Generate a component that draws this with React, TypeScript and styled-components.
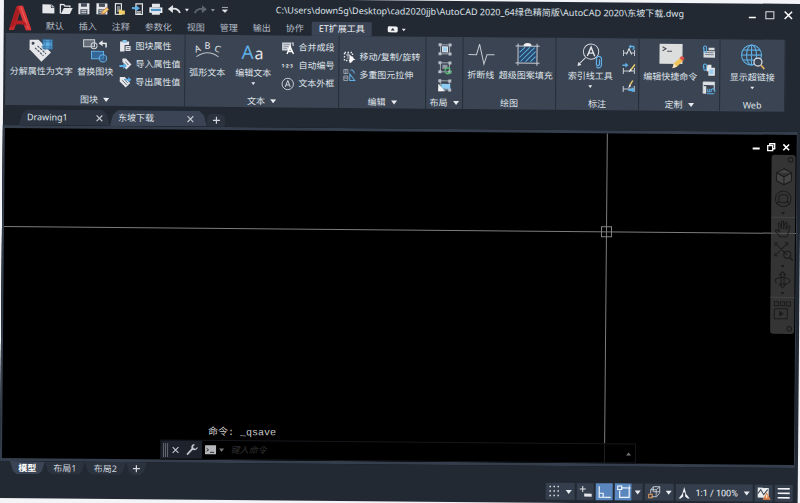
import React from "react";
import styled, { createGlobalStyle, css } from "styled-components";

const GlobalStyle = createGlobalStyle`
  * { box-sizing: border-box; }
  html, body { margin: 0; padding: 0; overflow: hidden; }
  body {
    background: #f3f4f7;
    color: #dfe3e9;
    font: 9px/12px "Noto Sans", "Noto Sans CJK SC", sans-serif;
  }
  button, input { font: inherit; color: inherit; }
  button { background: none; border: 0; padding: 0; margin: 0; }
  svg { display: block; flex: none; overflow: visible; }
`;

const Desk = styled.div`
  height: 100vh;
  overflow: hidden;
`;

const Window = styled.div`
  display: flex;
  flex-direction: column;
  width: calc(100vw - 2px);
  height: calc(100vh - 2px);
  margin: -3px 0 0 4px;
  background: #222933;
  transform: rotate(0.5deg);
  transform-origin: 0 0;
`;

/* ---------- header ---------- */

const Header = styled.header`
  display: grid;
  grid-template-columns: 35px 1fr;
  grid-template-rows: 22px 14px;
`;

const AppButton = styled.button`
  grid-row: 1 / 3;
  padding: 5px 0 0 5px;
`;

const TitleBar = styled.div`
  display: flex;
  align-items: center;
  padding-right: 5px;
`;

const SlotButton = styled.button<{ $w?: number }>`
  display: flex;
  align-items: center;
  justify-content: center;
  width: ${(p) => p.$w ?? 18}px;
  height: 16px;
`;

const Title = styled.h1`
  flex: 1;
  margin: 0 0 0 43px;
  font-size: 9px;
  font-weight: 400;
  line-height: 16px;
  white-space: nowrap;
`;

const MenuTabs = styled.nav`
  display: flex;
  gap: 1px;
`;

const MenuTab = styled.button<{ $active?: boolean }>`
  padding: 0 7px;
  line-height: 14px;
  color: #b4bac4;
  white-space: nowrap;
  ${(p) =>
    p.$active &&
    css`
      background: #3b4454;
      color: #eef1f5;
    `}
`;

const PlayButton = styled.button`
  display: flex;
  align-items: center;
  gap: 4px;
  margin-left: 15px;
`;

/* ---------- ribbon ---------- */

const Ribbon = styled.div`
  display: flex;
  margin-left: 2px;
`;

const Panel = styled.section<{ $w: number }>`
  display: flex;
  flex-direction: column;
  width: ${(p) => p.$w}px;
  height: 72px;
  background: #3b4453;
  border-right: 1px solid #252d38;
`;

const PanelBody = styled.div<{ $pad?: number }>`
  display: flex;
  flex: 1;
  justify-content: ${(p) => (p.$pad === undefined ? "center" : "flex-start")};
  padding-left: ${(p) => p.$pad ?? 0}px;
`;

const Caption = styled.button`
  display: flex;
  align-items: center;
  justify-content: center;
  gap: 5px;
  height: 12px;
`;

const BigButton = styled.button<{ $w: number }>`
  display: flex;
  flex-direction: column;
  align-items: center;
  gap: 3px;
  width: ${(p) => p.$w}px;
  padding-top: 5px;
  white-space: nowrap;
`;

const SmallColumn = styled.div<{ $pad?: number }>`
  display: flex;
  flex-direction: column;
  justify-content: center;
  padding-left: ${(p) => p.$pad ?? 0}px;
`;

const SmallButton = styled.button`
  display: flex;
  align-items: center;
  gap: 4px;
  height: 18px;
  white-space: nowrap;
`;

/* ---------- document tabs ---------- */

const FileTabs = styled.div`
  display: flex;
  align-items: flex-end;
  height: 20px;
  padding-left: 16px;
`;

const FileTab = styled.div<{ $active?: boolean }>`
  display: flex;
  align-items: center;
  justify-content: space-between;
  width: ${(p) => (p.$active ? 97 : 91)}px;
  height: 16px;
  padding: 0 8px;
  padding-right: ${(p) => (p.$active ? 13 : 7)}px;
  background: ${(p) => (p.$active ? "#3b4454" : "#2d3542")};
  clip-path: polygon(0 100%, 3px 30%, 8px 0, calc(100% - 8px) 0, calc(100% - 3px) 30%, 100% 100%);
`;

const AddTab = styled.button`
  display: flex;
  align-items: center;
  justify-content: center;
  width: 18px;
  height: 13px;
  background: #2b333f;
  border-radius: 5px 5px 2px 2px;
`;

/* ---------- drawing area ---------- */

const Canvas = styled.main`
  position: relative;
  flex: 1;
  margin: 0 3px 0 0;
  background: #000;
  border: solid #343e4c;
  border-width: 3px 1px 3px 2px;
  overflow: hidden;
`;

const HorizontalHair = styled.div`
  position: absolute;
  left: 0;
  right: 0;
  top: 98px;
  height: 1px;
  background: #7c7c7c;
`;

const VerticalHair = styled.div`
  position: absolute;
  top: 0;
  bottom: 0;
  left: 76%;
  width: 1px;
  background: #7c7c7c;
`;

const PickBox = styled.div`
  position: absolute;
  top: 93px;
  left: calc(76% - 5px);
  width: 11px;
  height: 11px;
  border: 1px solid #858585;
`;

const ViewControls = styled.div`
  position: absolute;
  top: 4px;
  right: 3px;
  display: flex;
`;

const NavBar = styled.aside`
  position: absolute;
  top: 20px;
  right: 1px;
  display: flex;
  flex-direction: column;
  align-items: center;
  width: 24px;
  background: rgba(72, 72, 72, 0.72);
  border-radius: 3px;
`;

const NavButton = styled.button<{ $h: number; $line?: boolean }>`
  display: flex;
  align-items: center;
  justify-content: center;
  width: 100%;
  height: ${(p) => p.$h}px;
  border-bottom: ${(p) => (p.$line ? "1px solid #444" : "0")};
`;

const NavEnd = styled.button<{ $h: number }>`
  align-self: flex-end;
  width: 10px;
  height: ${(p) => p.$h}px;
  padding: 2px;
`;

const History = styled.div`
  position: absolute;
  left: 26%;
  bottom: 21px;
  color: #c9c9c9;
  font: 10px/12px "Liberation Mono", "Noto Sans CJK SC", monospace;
  white-space: pre;
`;

const CommandLine = styled.div`
  position: absolute;
  left: 20%;
  bottom: 0;
  display: flex;
  align-items: center;
  width: 60%;
  height: 20px;
  background: rgba(0, 0, 0, 0.75);
  border: 1px solid #15171c;
`;

const CommandGrip = styled.div`
  display: flex;
  align-items: center;
  height: 100%;
  padding-left: 2px;
  background: #1d222d;
`;

const CommandInput = styled.input`
  flex: 1;
  min-width: 0;
  padding: 0 0 0 4px;
  background: none;
  border: 0;
  outline: 0;
  &::placeholder {
    color: #303030;
    font-style: italic;
    opacity: 1;
  }
`;

/* ---------- footer ---------- */

const LayoutTabs = styled.nav`
  display: flex;
  padding-left: 10px;
`;

const LayoutTab = styled.button<{ $w: number; $active?: boolean }>`
  display: flex;
  align-items: center;
  justify-content: center;
  width: ${(p) => p.$w}px;
  height: 13px;
  background: ${(p) => (p.$active ? "#3b4454" : "#2b333f")};
  font-weight: ${(p) => (p.$active ? 700 : 400)};
  color: ${(p) => (p.$active ? "#fff" : "#ccd1d9")};
  clip-path: polygon(0 0, 100% 0, calc(100% - 3px) 75%, calc(100% - 7px) 100%, 7px 100%, 3px 75%);
`;

const StatusBar = styled.footer`
  display: flex;
  justify-content: flex-end;
  gap: 2px;
  padding: 4px 5px 3px 0;
`;

const StatusButton = styled.button<{ $w: number; $on?: boolean }>`
  display: flex;
  align-items: center;
  justify-content: space-around;
  width: ${(p) => p.$w}px;
  height: 17px;
  background: ${(p) => (p.$on ? "#5a87bd" : "#343e4c")};
  white-space: nowrap;
`;

const StatusPair = styled.div`
  display: flex;
`;

const ScaleText = styled.span`
  color: #f2f4f7;
  font-family: Roboto, "Noto Sans", sans-serif;
`;

/* ---------- icons ---------- */

type Kids = { children?: React.ReactNode };
const Icon = ({ w, h = w, box, children }: Kids & { w: number; h?: number; box?: string }) => (
  <svg width={w} height={h} viewBox={box ?? `0 0 ${w} ${h}`} fill="none" aria-hidden="true">
    {children}
  </svg>
);

const Caret = ({ size = 6, color = "#e8ebf0" }: { size?: number; color?: string }) => (
  <Icon w={size} h={size > 4 ? 4 : 3} box="0 0 6 4">
    <path d="M0 0h6L3 4z" fill={color} />
  </Icon>
);

const Cross = ({ size = 7, color = "#c3c8d0", weight = 1.3 }) => (
  <Icon w={size} box="0 0 8 8">
    <path d="M.7.7l6.6 6.6M7.3.7L.7 7.3" stroke={color} strokeWidth={weight} />
  </Icon>
);

const Plus = () => (
  <Icon w={7}>
    <path d="M3.5 0v7M0 3.5h7" stroke="#d5d9df" strokeWidth="1.2" />
  </Icon>
);

const Logo = () => (
  <Icon w={23} h={26}>
    <path d="M7.5 2Q8 .5 10 .5h4L22.5 24q.2 1-1 1h-3.7q-1 0-1.300-1L11 7 5.700 24q-.4 1-1.400 1H1q-1 0-.6-1.200z" fill="#c62a2c" />
    <path d="M10 .5h4L22.500 24q.2 1-1 1h-3.700L10.500 6z" fill="#d9383a" />
    <path d="M7.500 2L10.500 6 5.500 21 1 22.500z" fill="#a81d22" />
    <path d="M5.500 16Q12 13.500 18.500 18l1 3.500Q12 17.500 4.500 20.500z" fill="#b42025" />
    <path d="M12 2l7.500 21" stroke="#ee6a64" strokeWidth=".8" />
  </Icon>
);

const W = "#e4e6e9";
const B = "#5fb0e6";
const Y = "#f0cf6a";

const NewIcon = () => (
  <Icon w={13} h={11}>
    <path d="M.5 1H9v3.500h3.500V10H.5z" fill={W} />
    <path d="M9.500.500L13 4H9.500z" fill="#aeb3ba" />
  </Icon>
);
const OpenIcon = () => (
  <Icon w={13} h={11}>
    <path d="M.5 10V1h3.500l1 1.500h5V4" stroke={W} strokeWidth="1.300" />
    <path d="M1 10.500L4 4.500h8.800L10 10.500z" fill={W} />
  </Icon>
);
const SaveIcon = ({ pencil = false }) => (
  <Icon w={13} h={12}>
    <path d="M.5.500h11v11H.5z" fill={W} />
    <path d="M3 .500h6v3.500H3zM2.500 6.500h7v5h-7z" fill="#454d5a" />
    <path d="M3.500 8h5M3.500 10h5" stroke={W} />
    {pencil && <path d="M5.500 11.500l1-3 4.500-4 2 2-4.500 4z" fill={Y} stroke="#c25a3a" strokeWidth=".6" />}
  </Icon>
);
const DocInIcon = () => (
  <Icon w={12} h={12}>
    <path d="M1.500.700h6v10.600h-6z" stroke={W} strokeWidth="1.200" />
    <path d="M3 4h3M3 6h3M3 8h3" stroke={W} />
    <path d="M5 11.500v-5h2.500l.7 1H11v4z" fill={Y} />
  </Icon>
);
const DocOutIcon = () => (
  <Icon w={12} h={12}>
    <path d="M4 .700h6.500v10.600H4z" stroke={W} strokeWidth="1.200" />
    <path d="M5 8.500h4M5 10h4" stroke={W} />
    <path d="M0 4h4V2l4 3-4 3V6H0z" fill={B} />
  </Icon>
);
const PrintIcon = () => (
  <Icon w={14} h={12}>
    <path d="M3 .500h8V4H3z" fill={W} />
    <path d="M.5 4h13v5.500H.5z" fill="#f3f4f5" />
    <path d="M2 5.500h10V8H2z" fill="#4d93c8" />
    <path d="M3 8h8v3.500H3z" fill={W} />
  </Icon>
);
const UndoIcon = ({ color = W, flip = false }) => (
  <Icon w={13} h={10}>
    <g transform={flip ? "matrix(-1 0 0 1 13 0)" : undefined}>
      <path d="M3 4.500q7-1.500 9 4" stroke={color} strokeWidth="1.900" />
      <path d="M0 4.500L5 .500v8z" fill={color} />
    </g>
  </Icon>
);

const TagIcon = () => (
  <Icon w={26} h={24}>
    <path d="M1 1.500h9L22.500 14 13 23.500 1 11z" fill={W} />
    <circle cx="4.500" cy="5" r="1.500" fill="#3b4453" />
    <path d="M6.500 9.500l8.500 8M9 7.500l8.500 8" stroke="#3b4453" strokeDasharray="2.500 1" />
    <path d="M14.500 1.500h9v9h-9z" fill={B} stroke="#3979ac" />
    <path d="M13 3.500h12M13 8.500h12M16.500 0v12M21.500 0v12" stroke="#2b5f8d" strokeWidth=".7" />
  </Icon>
);
const ReplaceIcon = () => (
  <Icon w={26} h={24}>
    <path d="M1 1h11v7H1z" fill="#656d79" stroke="#ced2d8" />
    <circle cx="11.500" cy="7" r="3" stroke="#ced2d8" />
    <path d="M19 4.500h4.500V8.500" stroke={W} strokeWidth="1.500" />
    <path d="M16 4.500l4-3v6z" fill={W} />
    <path d="M9 12.500h12v7.500H9z" fill="#356899" stroke={B} />
    <circle cx="20.500" cy="19.500" r="3.700" fill="#356899" fillOpacity=".6" stroke={B} />
  </Icon>
);
const BlockAttr = () => (
  <Icon w={12} h={12}>
    <path d="M.5 1.500h9v10h-9z" fill={W} />
    <path d="M3 0h4v3H3z" fill="#8ec7ec" />
    <path d="M5.500 5.500h6v6h-6z" fill={W} stroke="#3b4453" />
    <path d="M7 7.500h3M7 9.500h3" stroke="#3b4453" strokeWidth=".7" />
  </Icon>
);
const AttrTag = ({ out = false }) => (
  <Icon w={12} h={12}>
    <path d={out ? "M.5 1h5l5.500 6-4.500 4.500-6-6z" : "M3 .500h3.500L12 6.500 7 11.500 4.500 9l2-2L3 4z"} fill={W} />
    <path d={out ? "M3 4l4.500 5M5 3l3.500 4" : "M6 3.500l3 3.500"} stroke="#3b4453" strokeWidth=".7" />
    <path d={out ? "M5 3h4V1l3 2.700L9 6.500V4.500H6z" : "M0 7h4V5l3.500 3L4 11V9H0z"} fill={B} />
  </Icon>
);
const LatinGlyphs = styled.g`
  font-family: "Noto Sans", sans-serif;
`;
const ArcText = () => (
  <Icon w={26} h={24}>
    <LatinGlyphs fill="#e6e8eb" fontSize="9" textAnchor="middle">
      <text x="4" y="12" transform="rotate(-20 4 12)">A</text>
      <text x="13" y="9">B</text>
      <text x="22" y="12" transform="rotate(20 22 12)">C</text>
    </LatinGlyphs>
    <path d="M2 17q11-8 22 0" stroke="#bcc2ca" />
  </Icon>
);
const EditText = () => (
  <Icon w={26} h={24}>
    <LatinGlyphs>
      <text x="1" y="19" fontSize="19" fill={B}>A</text>
      <text x="14" y="19" fontSize="16" fill={W}>a</text>
    </LatinGlyphs>
  </Icon>
);
const MergeIcon = () => (
  <Icon w={13} h={13}>
    <path d="M.5 1h9v8h-9z" fill="#cfd3d9" />
    <path d="M2 3h6M2 5h5M2 7h3" stroke="#77808c" strokeWidth=".7" />
    <path d="M5.500 12.500L8.500 5l3.500 7.500M7 10h4" stroke="#fff" strokeWidth="1.400" />
    <path d="M10 1.500h1.500v3" stroke={W} />
  </Icon>
);
const NumberIcon = () => (
  <Icon w={13} h={12}>
    <LatinGlyphs>
      <text x="0" y="8" fontSize="5" fontWeight="700" fill={W}>1·2·3</text>
    </LatinGlyphs>
  </Icon>
);
const CircledA = () => (
  <Icon w={13} h={13}>
    <circle cx="6.500" cy="6.500" r="5.700" stroke={W} strokeWidth=".8" />
    <path d="M4 9.500l2.500-6.500L9 9.500M5 7.500h3" stroke={W} strokeWidth=".9" />
  </Icon>
);
const MoveIcon = () => (
  <Icon w={12} h={12}>
    <path d="M1 1.500h8v8H1z" stroke={W} strokeWidth="1.400" strokeDasharray="1.500 1.500" />
    <path d="M2.500 4h4M4.500 2v6" stroke={W} strokeWidth=".7" />
    <path d="M6 3.500l6 5.500H9l-1 2.500L6 12z" fill="#fff" />
  </Icon>
);
const StretchIcon = () => (
  <Icon w={12} h={12}>
    <path d="M.5.500h4v4h-4zM.5 7h4v4.500h-4zM2.500.500V5M.5 9h4" stroke="#aab1bb" strokeWidth=".8" />
    <path d="M7 1h2q2 1.500 2 3.500M6.500 5l5 6.500h-5V7z" stroke={B} />
  </Icon>
);
const LayoutIcon = ({ kind }: { kind: number }) => (
  <Icon w={13} h={13}>
    <path d="M2 2h9v9H2z" stroke="#b9bfc7" strokeWidth=".8" />
    <path d="M0 .500h3v3H0zM10 .500h3v3h-3zM0 9.500h3v3H0zM10 9.500h3v3h-3z" fill="#b9bfc7" />
    {kind === 0 && <path d="M4 4h5v5H4z" fill="#9fd0ef" stroke={W} />}
    {kind === 1 && (
      <>
        <path d="M4 4h5v4H4z" fill="#9299a4" />
        <path d="M6.500 10a3 3 0 015.500-1.500M12.500 10a3 3 0 01-5.500 1.500" stroke="#4fc06c" strokeWidth="1.400" />
      </>
    )}
    {kind === 2 && (
      <>
        <path d="M3 5h9v5H3z" fill="#8ccbf2" />
        <path d="M0 5l7 7.500H0z" fill="#f2f3f4" />
      </>
    )}
  </Icon>
);
const BreakIcon = () => (
  <Icon w={26} h={24}>
    <path d="M0 12.500h8l3-10.500 4.500 20 3-9.500H26" stroke="#c6cbd2" strokeWidth="1" />
  </Icon>
);
const HatchIcon = () => (
  <Icon w={28} h={24}>
    <path d="M5.500 4.500h17v15h-17z" fill="#27496b" />
    <path d="M6 10l5.500-5.500M6 15l10.500-10.500M7 19L21 5M12 19l10-10M17 19l5-5" stroke="#63aee0" />
    <path d="M2 3.500h24M2 20.500h24M4.500 1v22M23.500 1v22" stroke="#c8cdd4" />
    <path d="M10 3.500q0-3 4-3t4 3z" fill="#f0f1f3" />
  </Icon>
);
const LeaderIcon = () => (
  <Icon w={26} h={26}>
    <circle cx="13.500" cy="8.500" r="7.700" stroke="#d2d6dc" />
    <path d="M9.800 13l3.700-9 3.700 9M11.200 10h4.600" stroke={W} strokeWidth="1.400" />
    <path d="M8 14.500L2 20.500" stroke="#d2d6dc" />
    <path d="M0 23l1-4 3 3z" fill={W} />
    <path d="M22 16v5.500q-1.500 2-3 0V15q2.500-3.500 5 0v7.500q-2.500 4-5 1" stroke={B} strokeWidth="1.200" />
  </Icon>
);
const DimIcon = ({ kind }: { kind: number }) => (
  <Icon w={13} h={12}>
    <path d="M1 5.500v6M12 5.500v6M1 8.500h11" stroke="#c6cbd2" />
    {kind === 0 && (
      <>
        <path d="M4 10l2.500-6L9 10" fill="#3b4453" stroke={W} />
        <path d="M7.500 2H11q1.500 2-1 3" stroke={B} strokeWidth="1.300" />
        <path d="M6 2l2.500-2v4z" fill={B} />
      </>
    )}
    {kind === 1 && (
      <>
        <path d="M0 2h3V0l3 2.700L3 5V3.500H0z" fill={B} />
        <path d="M12.500 2L8 8" stroke={Y} strokeWidth="1.400" />
        <path d="M8 6l1.500 2L6 10z" fill={W} />
      </>
    )}
    {kind === 2 && (
      <>
        <path d="M10.500 0L7.500 5" stroke={Y} strokeWidth="1.400" />
        <path d="M7 4l2 1.500L6 8z" fill={W} />
        <path d="M6 8.500h3.500V6.500L13 9.500l-3.500 2.500v-1.500H6z" fill={B} />
      </>
    )}
  </Icon>
);
const CommandIcon = () => (
  <Icon w={28} h={26}>
    <path d="M2 0h23v20H2z" fill="#dcdddd" />
    <path d="M5 3l3.500 2L5 7M9.500 7.500h5" stroke="#4a4f57" />
    <path d="M15 24.500l1.500-5 6.500-6 3 3-6.500 6.500z" fill="#f2c35b" />
    <path d="M15 24.500l1.500-5 3 3.500z" fill="#f6e7c4" />
    <path d="M22 14l1.500-1.500q2.500-.5 3.500 2L25 17z" fill="#df5348" />
  </Icon>
);
const CustomIcon = ({ kind }: { kind: number }) => (
  <Icon w={13} h={13}>
    {kind === 0 && <path d="M1 6h11.500v6.500H1zM6 2.500h6V5H6z" fill="#d7dade" />}
    {kind === 0 && <path d="M2.500 9.500h8.500M2.500 7.500h8.500" stroke="#7a828d" />}
    {kind === 1 && <path d="M5 1.500h4v3h3.500v8H6V8H4z" fill="#e6e8ea" />}
    {kind === 1 && <path d="M7 6h4v5H7z" fill="#9bcdf0" />}
    {kind < 2 && <path d="M1 5V2q1.500-2 3 0v4q-1.500 2-2.500.5V3" stroke={B} />}
    {kind === 2 && (
      <>
        <path d="M1 1h11v3H1zM1 5h3v7H1z" fill="#dde0e4" />
        <path d="M1 1h11v8.500M1 1v11h3" stroke="#dde0e4" />
        <path d="M5.500 7.500v3h2v-3M9 11V8.500q2-2 3.500 0V11M5 12.500h7" stroke={B} />
      </>
    )}
  </Icon>
);
const WebIcon = () => (
  <Icon w={26} h={26}>
    <g stroke={B} strokeWidth="1.100">
      <circle cx="12" cy="10.500" r="10" />
      <ellipse cx="12" cy="10.500" rx="5" ry="10" />
      <path d="M12 .500v20M2 10.500h20M3.500 5.500h17M3.500 15.500h17" />
    </g>
    <circle cx="18.500" cy="17.500" r="4" fill="#3b4453" stroke="#e0e3e7" strokeWidth="1.200" />
    <path d="M21.500 20.500l3.500 4" stroke="#d9a960" strokeWidth="1.700" />
  </Icon>
);

const N = "#1b1b1b";
const CubeIcon = () => (
  <Icon w={17} h={18}>
    <path d="M8.500 1L16 5v8l-7.500 4L1 13V5zM1 5l7.500 4L16 5M8.500 9v8" fill="#565656" fillOpacity=".5" stroke={N} />
  </Icon>
);
const WheelIcon = () => (
  <Icon w={18}>
    <circle cx="9" cy="9" r="7.800" stroke={N} />
    <rect x="4.500" y="5" width="9" height="8" rx="3" stroke={N} />
    <path d="M2 14.500l3-3M16 14.500l-3-3" stroke={N} />
  </Icon>
);
const HandIcon = () => (
  <Icon w={18}>
    <path d="M6 17q-2-3-4.500-5.500Q1 9.500 3 10l2.500 2-1.500-8q1-2 2 0L7.500 9V2q1-1.500 2 0v7l1.500-6q1.500-1.500 2 .5L12 10l2.500-4q1.500-.5 1.500 1l-3 10z" stroke={N} />
  </Icon>
);
const ZoomIcon = () => (
  <Icon w={19}>
    <path d="M2 2l11 11M13 2L2 13M1 4V1h3M11 1h3v3M1 11v3h3" stroke={N} />
    <circle cx="13.500" cy="13" r="3.500" stroke={N} />
    <path d="M16 15.500l3 3" stroke={N} strokeWidth="1.400" />
  </Icon>
);
const OrbitIcon = () => (
  <Icon w={18}>
    <path d="M7.500 4v10H6l3 3 3-3h-1.500V4H12L9 1 6 4z" stroke={N} />
    <path d="M3 12q-4-3 2-5 6-1 10 1 4 3-2 5l-7 .2" stroke={N} />
  </Icon>
);
const MotionIcon = () => (
  <Icon w={18} h={19}>
    <path d="M1 1h4v4H1zM7 1h4v4H7zM13 1h4v4h-4zM1 8h13v10H1z" stroke={N} />
    <path d="M6 10l4.500 3L6 16z" fill={N} />
  </Icon>
);

/* ---------- composition ---------- */

const Small = ({ icon, label, aria }: { icon: React.ReactNode; label?: string; aria?: string }) => (
  <SmallButton aria-label={aria}>
    {icon}
    {label}
  </SmallButton>
);

const Big = ({ w, icon, label, menu }: { w: number; icon: React.ReactNode; label: string; menu?: boolean }) => (
  <BigButton $w={w}>
    <Icon w={28} h={24} box="-1 0 28 24">
      {icon}
    </Icon>
    <span>{label}</span>
    {menu && <Caret size={4} />}
  </BigButton>
);

const menuNames = ["默认", "插入", "注释", "参数化", "视图", "管理", "输出", "协作"];

export default function App() {
  return (
    <Desk>
      <GlobalStyle />
      <Window>
        <Header>
          <AppButton aria-label="AutoCAD"><Logo /></AppButton>
          <TitleBar>
            <SlotButton aria-label="新建"><NewIcon /></SlotButton>
            <SlotButton aria-label="打开"><OpenIcon /></SlotButton>
            <SlotButton aria-label="保存"><SaveIcon /></SlotButton>
            <SlotButton aria-label="另存为"><SaveIcon pencil /></SlotButton>
            <SlotButton aria-label="从移动设备打开"><DocInIcon /></SlotButton>
            <SlotButton aria-label="保存到移动设备"><DocOutIcon /></SlotButton>
            <SlotButton aria-label="打印"><PrintIcon /></SlotButton>
            <SlotButton aria-label="放弃"><UndoIcon /></SlotButton>
            <SlotButton $w={8} aria-label="放弃列表"><Caret size={4} /></SlotButton>
            <SlotButton aria-label="重做"><UndoIcon flip color="#5d6570" /></SlotButton>
            <SlotButton $w={8} aria-label="重做列表"><Caret size={4} color="#8a919b" /></SlotButton>
            <SlotButton $w={16} aria-label="自定义">
              <Icon w={6} h={6}><path d="M0 .500h6M.500 3h5L3 5.500z" fill={W} stroke={W} strokeWidth=".7" /></Icon>
            </SlotButton>
            <Title>C:\Users\down5g\Desktop\cad2020jjb\AutoCAD 2020_64绿色精简版\AutoCAD 2020\东坡下载.dwg</Title>
            <SlotButton aria-label="最小化">
              <Icon w={7} h={7}><path d="M0 6h7" stroke="#fff" strokeWidth="1.500" /></Icon>
            </SlotButton>
            <SlotButton aria-label="最大化">
              <Icon w={10} h={9}><path d="M1 1h8v7H1z" stroke="#dfe2e6" /></Icon>
            </SlotButton>
            <SlotButton aria-label="关闭"><Cross size={9} color="#fff" /></SlotButton>
          </TitleBar>
          <MenuTabs>
            {menuNames.map((name) => (
              <MenuTab key={name}>{name}</MenuTab>
            ))}
            <MenuTab $active>ET扩展工具</MenuTab>
            <PlayButton aria-label="功能区显示">
              <Icon w={10} h={6}>
                <rect width="10" height="6" rx="1.500" fill="#f0f2f4" />
                <path d="M3 4l2-2.500L7 4z" fill="#222933" />
              </Icon>
              <Caret size={4} />
            </PlayButton>
          </MenuTabs>
        </Header>

        <Ribbon>
          <Panel $w={180}>
            <PanelBody $pad={3}>
              <Big w={66} icon={<TagIcon />} label="分解属性为文字" />
              <Big w={42} icon={<ReplaceIcon />} label="替换图块" />
              <SmallColumn $pad={3}>
                <Small icon={<BlockAttr />} label="图块属性" />
                <Small icon={<AttrTag />} label="导入属性值" />
                <Small icon={<AttrTag out />} label="导出属性值" />
              </SmallColumn>
            </PanelBody>
            <Caption>图块 <Caret /></Caption>
          </Panel>
          <Panel $w={154}>
            <PanelBody $pad={0}>
              <Big w={44} icon={<ArcText />} label="弧形文本" />
              <Big w={48} icon={<EditText />} label="编辑文本" menu />
              <SmallColumn $pad={4}>
                <Small icon={<MergeIcon />} label="合并成段" />
                <Small icon={<NumberIcon />} label="自动编号" />
                <Small icon={<CircledA />} label="文本外框" />
              </SmallColumn>
            </PanelBody>
            <Caption>文本 <Caret /></Caption>
          </Panel>
          <Panel $w={87}>
            <PanelBody $pad={0}>
              <SmallColumn $pad={4}>
                <Small icon={<MoveIcon />} label="移动/复制/旋转" />
                <Small icon={<StretchIcon />} label="多重图元拉伸" />
              </SmallColumn>
            </PanelBody>
            <Caption>编辑 <Caret /></Caption>
          </Panel>
          <Panel $w={37}>
            <PanelBody>
              <SmallColumn>
                <Small icon={<LayoutIcon kind={0} />} aria="对齐空间" />
                <Small icon={<LayoutIcon kind={1} />} aria="同步视口" />
                <Small icon={<LayoutIcon kind={2} />} aria="合并布局" />
              </SmallColumn>
            </PanelBody>
            <Caption>布局 <Caret /></Caption>
          </Panel>
          <Panel $w={93}>
            <PanelBody $pad={0}>
              <Big w={35} icon={<BreakIcon />} label="折断线" />
              <Big w={55} icon={<HatchIcon />} label="超级图案填充" />
            </PanelBody>
            <Caption>绘图</Caption>
          </Panel>
          <Panel $w={83}>
            <PanelBody>
              <Big w={62} icon={<LeaderIcon />} label="索引线工具" menu />
              <SmallColumn $pad={1}>
                <Small icon={<DimIcon kind={0} />} aria="重置文字" />
                <Small icon={<DimIcon kind={1} />} aria="输入样式" />
                <Small icon={<DimIcon kind={2} />} aria="输出样式" />
              </SmallColumn>
            </PanelBody>
            <Caption>标注</Caption>
          </Panel>
          <Panel $w={81}>
            <PanelBody $pad={1}>
              <Big w={60} icon={<CommandIcon />} label="编辑快捷命令" />
              <SmallColumn $pad={2}>
                <Small icon={<CustomIcon kind={0} />} aria="附着工具栏" />
                <Small icon={<CustomIcon kind={1} />} aria="附着文件" />
                <Small icon={<CustomIcon kind={2} />} aria="系统变量" />
              </SmallColumn>
            </PanelBody>
            <Caption>定制 <Caret /></Caption>
          </Panel>
          <Panel $w={65}>
            <PanelBody>
              <Big w={60} icon={<WebIcon />} label="显示超链接" menu />
            </PanelBody>
            <Caption>Web</Caption>
          </Panel>
        </Ribbon>

        <FileTabs>
          <FileTab>
            <button>Drawing1</button>
            <button aria-label="关闭 Drawing1"><Cross /></button>
          </FileTab>
          <FileTab $active>
            <button>东坡下载</button>
            <button aria-label="关闭 东坡下载"><Cross /></button>
          </FileTab>
          <AddTab aria-label="新图形"><Plus /></AddTab>
        </FileTabs>

        <Canvas>
          <HorizontalHair />
          <VerticalHair />
          <PickBox />
          <ViewControls>
            <SlotButton $w={15} aria-label="最小化视图">
              <Icon w={7} h={8}><path d="M0 6h7" stroke="#fff" strokeWidth="2" /></Icon>
            </SlotButton>
            <SlotButton $w={15} aria-label="还原视图">
              <Icon w={9} h={9}><path d="M1 3h5v5H1zM3 2.500V1h5v5H6.500" stroke="#fff" strokeWidth="1.300" /></Icon>
            </SlotButton>
            <SlotButton $w={15} aria-label="关闭视图"><Cross color="#fff" weight={1.8} /></SlotButton>
          </ViewControls>
          <NavBar>
            <NavEnd $h={10} aria-label="关闭导航栏"><Icon w={6}><circle cx="3" cy="3" r="2.300" stroke={N} /></Icon></NavEnd>
            <NavButton $h={24} aria-label="ViewCube"><CubeIcon /></NavButton>
            <NavButton $h={20} aria-label="控制盘"><WheelIcon /></NavButton>
            <NavButton $h={9} $line aria-label="控制盘菜单"><Caret size={4} color={N} /></NavButton>
            <NavButton $h={22} aria-label="平移"><HandIcon /></NavButton>
            <NavButton $h={22} aria-label="缩放"><ZoomIcon /></NavButton>
            <NavButton $h={8} aria-label="缩放菜单"><Caret size={4} color={N} /></NavButton>
            <NavButton $h={20} aria-label="动态观察"><OrbitIcon /></NavButton>
            <NavButton $h={8} $line aria-label="动态观察菜单"><Caret size={4} color={N} /></NavButton>
            <NavButton $h={25} aria-label="ShowMotion"><MotionIcon /></NavButton>
            <NavEnd $h={11} aria-label="导航栏选项"><Icon w={6}><circle cx="3" cy="3" r="2.300" stroke={N} /></Icon></NavEnd>
          </NavBar>
          <History>命令: _qsave</History>
          <CommandLine>
            <CommandGrip>
              <Icon w={5} h={13}>
                <path d="M.5 0v13M2.500 0v13M4.500 0v13" stroke="#a7abb2" strokeDasharray="1 1" />
              </Icon>
              <SlotButton $w={14} aria-label="关闭命令行"><Cross /></SlotButton>
              <SlotButton $w={20} aria-label="命令行设置">
                <Icon w={12}>
                  <path d="M1 11l6-6.500" stroke="#c3c7cd" strokeWidth="1.800" />
                  <path d="M11.500 3L9.500 5 7.500 4.700 7 2.800 9 .800Q6 0 5.300 2.500 5 4.500 6 5.800 8 7 10 6 12 5 11.500 3z" fill="#c3c7cd" />
                </Icon>
              </SlotButton>
            </CommandGrip>
            <SlotButton $w={24} aria-label="最近使用的命令">
              <Icon w={19} h={10}>
                <path d="M0 .500h11v9H0z" fill="#b5b7ba" />
                <path d="M1.500 3.500l2 1.500-2 1.500M5 7.500h4" stroke="#222" strokeWidth=".9" />
                <path d="M14 3.500h5L16.500 7z" fill="#777" />
              </Icon>
            </SlotButton>
            <CommandInput aria-label="命令" placeholder="键入命令" />
            <SlotButton $w={12} aria-label="命令历史">
              <Icon w={5} h={3}><path d="M0 3h5L2.500 0z" fill="#777" /></Icon>
            </SlotButton>
          </CommandLine>
        </Canvas>

        <LayoutTabs>
          <LayoutTab $w={35} $active>模型</LayoutTab>
          <LayoutTab $w={40}>布局1</LayoutTab>
          <LayoutTab $w={41}>布局2</LayoutTab>
          <LayoutTab $w={21} aria-label="新建布局"><Plus /></LayoutTab>
        </LayoutTabs>

        <StatusBar>
          <StatusButton $w={29} aria-label="栅格">
            <Icon w={11}>
              <path d="M1.500 0v11M5.500 0v11M9.500 0v11" stroke="#dde0e5" strokeWidth="1.500" strokeDasharray="1.500 3" />
            </Icon>
            <Caret />
          </StatusButton>
          <StatusButton $w={17} aria-label="动态输入">
            <Icon w={12} h={11}>
              <path d="M3 0v6M0 3h6" stroke={W} />
              <path d="M4.500 7.500H12v3H4.500z" fill={W} />
            </Icon>
          </StatusButton>
          <StatusButton $w={17} $on aria-label="正交">
            <Icon w={13} h={12}>
              <path d="M1.500 0v11H13M1.500 7h4v4" stroke="#eef4fb" strokeWidth="1.200" />
            </Icon>
          </StatusButton>
          <StatusPair>
            <StatusButton $w={17} $on aria-label="对象捕捉">
              <Icon w={14} h={13}>
                <path d="M5 2.500h7.500V12H3V5" stroke="#eef4fb" strokeWidth="1.200" />
                <path d="M1 .700h4v3.500H1z" stroke="#fff" />
                <path d="M12.500 0v2.500H14" stroke="#fff" strokeWidth=".8" />
              </Icon>
            </StatusButton>
            <StatusButton $w={11} aria-label="捕捉菜单"><Caret /></StatusButton>
          </StatusPair>
          <StatusButton $w={29} aria-label="三维对象捕捉">
            <Icon w={13} h={13}>
              <path d="M3 4l3-3h6v6L9 11H4M3 4h5.500v6M8.500 4L12 1M3 4v4M5.500 1v5H12" stroke="#c9ced5" strokeWidth=".9" />
              <path d="M1 8.500h3.500V12H1z" stroke="#e59a5c" />
            </Icon>
            <Caret />
          </StatusButton>
          <StatusButton $w={77}>
            <Icon w={11} h={12}>
              <path d="M5.500 0L7.500 7 11 11.500H9L6.500 9.500v-4h-2v4L2 11.500H0L3.500 7z" fill="#f1f3f5" />
            </Icon>
            <ScaleText>1:1 / 100%</ScaleText>
            <Caret />
          </StatusButton>
          <StatusButton $w={18} aria-label="图形性能">
            <Icon w={13} h={12}>
              <path d="M0 0h11v10H0z" fill="#e9ebed" />
              <path d="M0 6l3-4 3 5 4-5" stroke="#3b4453" />
              <path d="M9 4.500l4 7.500H5z" fill="#e2854a" />
              <path d="M9 7v3" stroke="#fff" />
            </Icon>
          </StatusButton>
          <StatusButton $w={18} aria-label="自定义">
            <Icon w={12} h={11}><path d="M0 1h12M0 5.500h12M0 10h12" stroke="#f1f3f5" strokeWidth="1.600" /></Icon>
          </StatusButton>
        </StatusBar>
      </Window>
    </Desk>
  );
}
